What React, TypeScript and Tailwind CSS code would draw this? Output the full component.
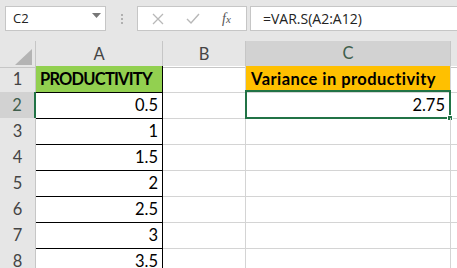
const rows = [
  { n: 1, a: "PRODUCTIVITY", c: "Variance in productivity" },
  { n: 2, a: "0.5", c: "2.75" },
  { n: 3, a: "1", c: "" },
  { n: 4, a: "1.5", c: "" },
  { n: 5, a: "2", c: "" },
  { n: 6, a: "2.5", c: "" },
  { n: 7, a: "3", c: "" },
  { n: 8, a: "3.5", c: "" },
];

const cols = "grid grid-cols-[36px_127px_83px_205px_1fr]";

export default function App() {
  return (
    <div className="w-[457px] h-[268px] overflow-hidden bg-white font-['Lato','Liberation_Sans',sans-serif] text-[16.5px] text-black">
      {/* Formula bar */}
      <div className="h-[41px] bg-[#e6e6e6] flex items-start pt-[6px] pl-[5px]">
        <div className="w-[101px] h-[25px] bg-white border border-[#c6c6c6] flex items-center justify-between pl-[7px] pr-[4px] font-['Open_Sans',sans-serif] text-[13px] text-[#222]">
          <span>C2</span>
          <svg width="9" height="5" viewBox="0 0 9 5" className="mb-[6px]">
            <path d="M0 0h9L4.5 5z" fill="#777" />
          </svg>
        </div>
        <div className="w-[31px] h-[25px] flex flex-col items-center justify-center gap-[2px]">
          <span className="w-[2px] h-[2px] bg-[#b0b0b0]" />
          <span className="w-[2px] h-[2px] bg-[#b0b0b0]" />
          <span className="w-[2px] h-[2px] bg-[#b0b0b0]" />
        </div>
        <div className="w-[110px] h-[25px] bg-white border border-[#c6c6c6] flex items-center">
          <svg width="12" height="12" viewBox="0 0 12 12" className="ml-[14px]">
            <path d="M1 1l10 10M11 1L1 11" stroke="#b8b8b8" strokeWidth="1.3" />
          </svg>
          <svg width="14" height="12" viewBox="0 0 14 12" className="ml-[22px]">
            <path d="M1 6l4 4 8-9" stroke="#b8b8b8" strokeWidth="1.4" fill="none" />
          </svg>
          <span className="ml-[22px] font-['Liberation_Serif',serif] italic text-[14px] text-[#555]">
            f<span className="text-[11px]">x</span>
          </span>
        </div>
        <div className="ml-[3px] flex-1 h-[25px] bg-white border-y border-l border-[#c6c6c6] flex items-center pl-[12px] font-['Open_Sans',sans-serif] text-[14px] text-[#222]">
          =VAR.S(A2:A12)
        </div>
      </div>

      {/* Column headers */}
      <div className={`${cols} h-[25px] bg-[#e6e6e6] text-[#444]`}>
        <div className="border-r border-b border-[#c6c6c6] relative">
          <svg width="17" height="16" viewBox="0 0 17 16" className="absolute right-[3px] bottom-[2px]">
            <path d="M17 0v16H0z" fill="#b4b4b4" />
          </svg>
        </div>
        <div className="border-r border-b border-[#c6c6c6] flex items-center justify-center">A</div>
        <div className="border-r border-b border-[#c6c6c6] flex items-center justify-center">B</div>
        <div className="bg-[#d2d2d2] border-r border-[#c6c6c6] border-b-2 border-b-[#217346] flex items-center justify-center text-[#3f5e4c]">
          C
        </div>
        <div className="border-b border-[#c6c6c6]" />
      </div>

      {/* Rows */}
      {rows.map((r) => (
        <div key={r.n} className={`${cols} h-[26px]`}>
          <div
            className={
              r.n === 2
                ? "bg-[#d2d2d2] border-r-2 border-r-[#217346] border-b border-[#c6c6c6] flex items-center justify-center pt-px text-[#3f5e4c]"
                : "bg-[#e6e6e6] border-r border-b border-[#c6c6c6] flex items-center justify-center pt-px text-[#444]"
            }
          >
            {r.n}
          </div>
          <div
            className={`border-r border-b border-black flex items-center px-[4px] pt-px ${
              r.n === 1 ? "bg-[#92d050] font-bold justify-start tracking-[-0.8px]" : "justify-end"
            }`}
          >
            {r.a}
          </div>
          <div className="border-r border-b border-[#d4d4d4]" />
          <div
            className={`relative flex items-center px-[5px] pt-px border-r border-b border-[#d4d4d4] ${
              r.n === 1 ? "bg-[#ffc000] font-bold justify-start tracking-[0.45px]" : "justify-end"
            }`}
          >
            {r.c}
            {r.n === 2 && (
              <>
                <div className="absolute -left-px -top-[2px] -right-px -bottom-px border-2 border-[#217346]" />
                <div className="absolute -right-[3px] -bottom-[3px] w-[6px] h-[6px] bg-[#217346] border border-white" />
              </>
            )}
          </div>
          <div className="border-b border-[#d4d4d4]" />
        </div>
      ))}
    </div>
  );
}
